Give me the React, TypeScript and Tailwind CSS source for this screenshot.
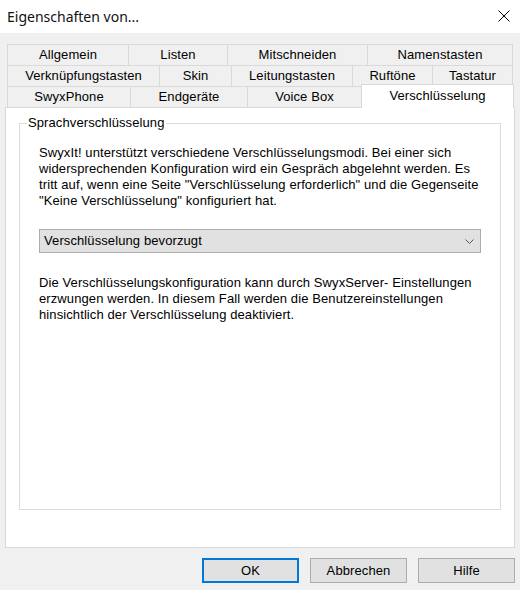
import React from "react";

const tabRow1 = [
  { label: "Allgemein", w: "w-[121px]" },
  { label: "Listen", w: "w-[99px]" },
  { label: "Mitschneiden", w: "w-[140px]" },
  { label: "Namenstasten", w: "w-[146px]" },
];

const tabRow2 = [
  { label: "Verknüpfungstasten", w: "w-[152px]" },
  { label: "Skin", w: "w-[72px]" },
  { label: "Leitungstasten", w: "w-[121px]" },
  { label: "Ruftöne", w: "w-[80px]" },
  { label: "Tastatur", w: "w-[81px]" },
];

const tabRow3 = [
  { label: "SwyxPhone", w: "w-[123px]" },
  { label: "Endgeräte", w: "w-[117px]" },
  { label: "Voice Box", w: "w-[114px]" },
];

function Tab({ label, w, last }: { label: string; w: string; last?: boolean }) {
  return (
    <div
      className={`${w} h-[21px] shrink-0 flex items-center justify-center border-t border-l border-[#d9d9d9] bg-[#f0f0f0] ${
        last ? "border-r" : ""
      }`}
    >
      {label}
    </div>
  );
}

function DialogButton({ label, primary }: { label: string; primary?: boolean }) {
  return (
    <button
      className={`w-[97px] h-[25px] flex items-center justify-center bg-[#e1e1e1] text-black ${
        primary ? "border-2 border-[#0078d7]" : "border border-[#adadad]"
      }`}
    >
      {label}
    </button>
  );
}

export default function App() {
  return (
    <div
      className="w-[520px] h-[590px] bg-[#f0f0f0] overflow-hidden text-[13px] leading-[16px] tracking-[0.1px] text-black"
      style={{ fontFamily: '"Liberation Sans", Arial, sans-serif' }}
    >
      {/* Title bar */}
      <div className="h-[33px] bg-white flex items-center justify-between pl-[7px] pr-[10px]">
        <span
          className="text-[14px] tracking-normal text-[#111]"
          style={{ fontFamily: '"Noto Sans", "Open Sans", sans-serif' }}
        >
          Eigenschaften von...
        </span>
        <svg width="12" height="12" viewBox="0 0 12 12" className="mt-[-1px]">
          <path d="M0.5 0.5 L11.5 11.5 M11.5 0.5 L0.5 11.5" stroke="#000" strokeWidth="1" fill="none" />
        </svg>
      </div>

      {/* Tab strip */}
      <div className="pt-[11px] ml-[7px] w-[506px]">
        <div className="flex">
          {tabRow1.map((t, i) => (
            <Tab key={t.label} {...t} last={i === tabRow1.length - 1} />
          ))}
        </div>
        <div className="flex">
          {tabRow2.map((t, i) => (
            <Tab key={t.label} {...t} last={i === tabRow2.length - 1} />
          ))}
        </div>
        <div className="flex h-[21px] items-start">
          {tabRow3.map((t) => (
            <Tab key={t.label} {...t} />
          ))}
          <div className="relative z-10 w-[153px] h-[24px] mt-[-2px] shrink-0 flex items-center justify-center bg-white border-t border-l border-r border-[#d9d9d9] pb-[1px]">
            Verschlüsselung
          </div>
        </div>
      </div>

      {/* Tab page */}
      <div className="ml-[5px] w-[510px] h-[441px] border border-[#d9d9d9] bg-white">
        <div className="relative mt-[15px] ml-[13px] w-[482px] h-[387px] border border-[#dcdcdc] pt-[21px] pl-[19px]">
          <span className="absolute left-[7px] top-[-9px] bg-white px-[1px]">Sprachverschlüsselung</span>

          <p>
            SwyxIt! unterstützt verschiedene Verschlüsselungsmodi. Bei einer sich
            <br />
            widersprechenden Konfiguration wird ein Gespräch abgelehnt werden. Es
            <br />
            tritt auf, wenn eine Seite "Verschlüsselung erforderlich" und die Gegenseite
            <br />
            "Keine Verschlüsselung" konfiguriert hat.
          </p>

          <div className="mt-[20px] w-[442px] h-[24px] flex items-center justify-between bg-[#e1e1e1] border border-[#adadad] pl-[4px] pr-[6px]">
            <span>Verschlüsselung bevorzugt</span>
            <svg width="9" height="5" viewBox="0 0 9 5">
              <path d="M0.5 0.5 L4.5 4.5 L8.5 0.5" stroke="#555" strokeWidth="1" fill="none" />
            </svg>
          </div>

          <p className="mt-[22px]">
            Die Verschlüsselungskonfiguration kann durch SwyxServer- Einstellungen
            <br />
            erzwungen werden. In diesem Fall werden die Benutzereinstellungen
            <br />
            hinsichtlich der Verschlüsselung deaktiviert.
          </p>
        </div>
      </div>

      {/* Dialog buttons */}
      <div className="mt-[10px] pl-[202px] flex gap-[11px]">
        <DialogButton label="OK" primary />
        <DialogButton label="Abbrechen" />
        <DialogButton label="Hilfe" />
      </div>
    </div>
  );
}
